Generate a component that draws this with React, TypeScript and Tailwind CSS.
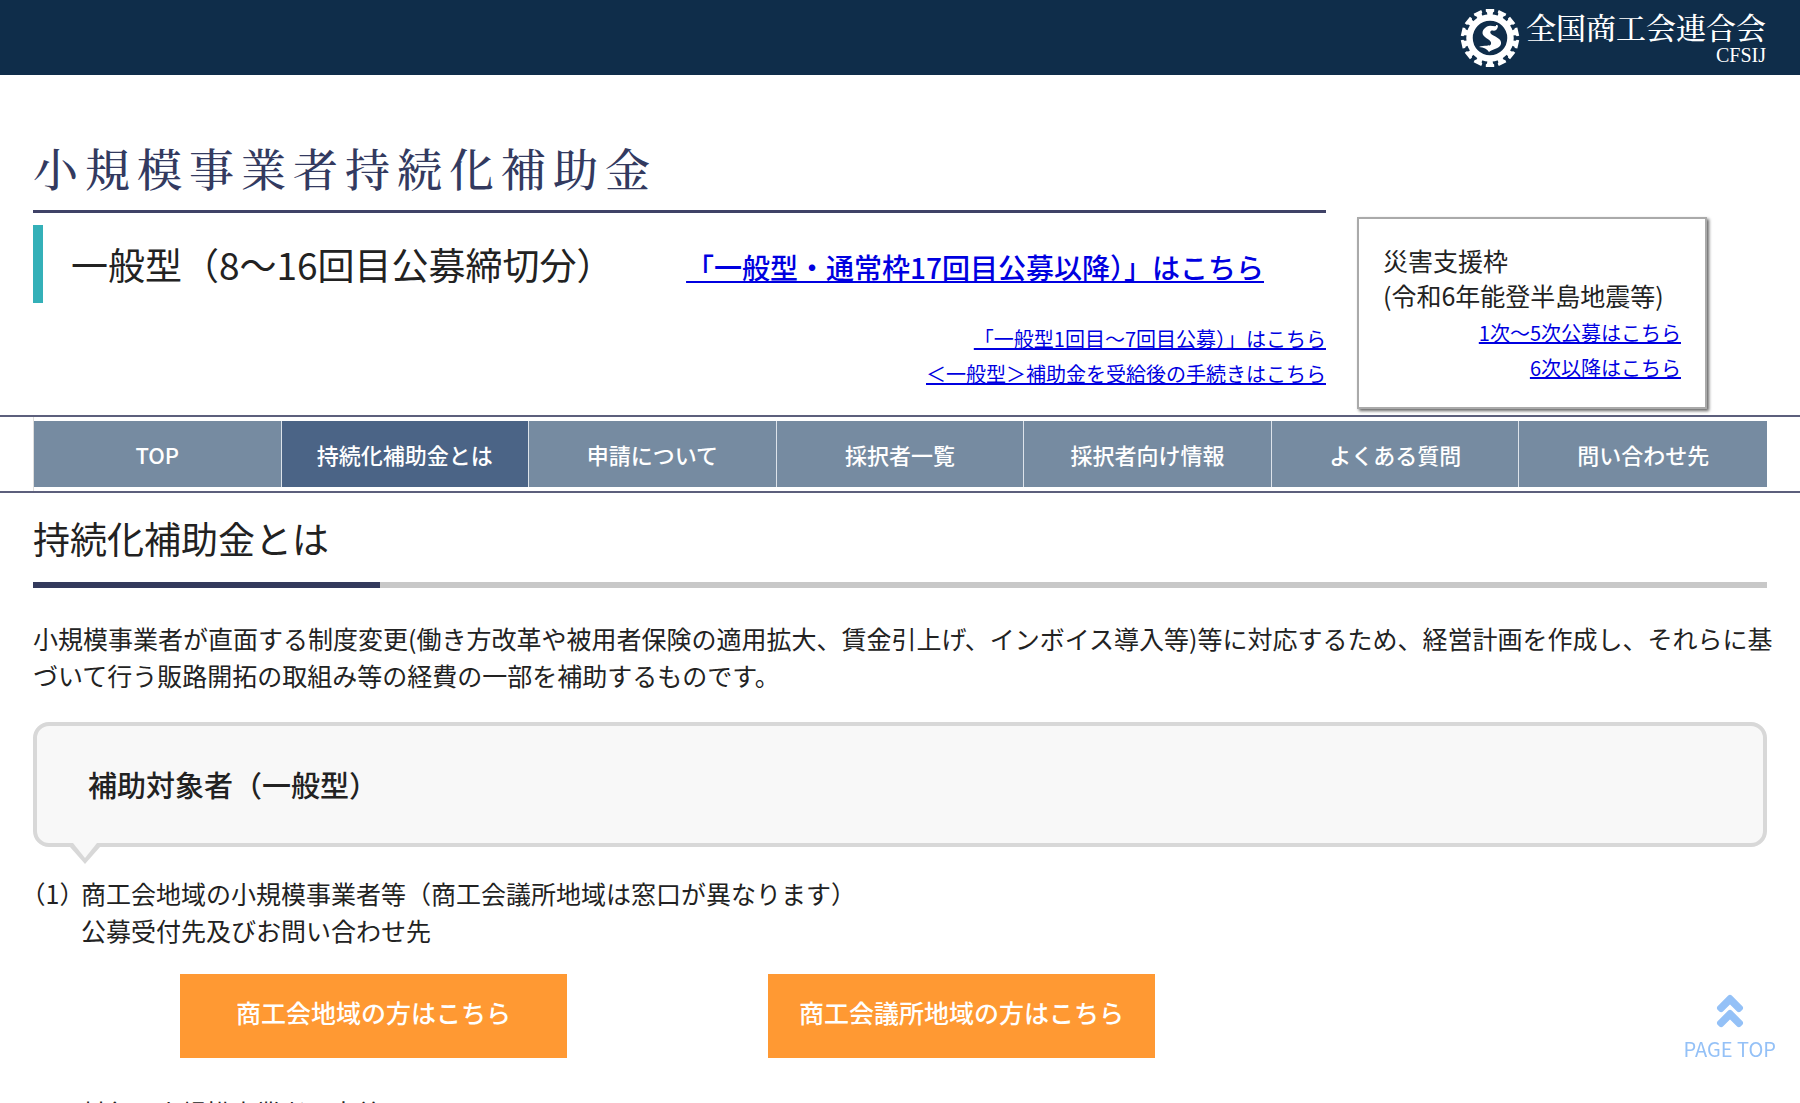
import { FaAngleDoubleUp } from "react-icons/fa";

const navItems = [
  { label: "TOP", active: false },
  { label: "持続化補助金とは", active: true },
  { label: "申請について", active: false },
  { label: "採択者一覧", active: false },
  { label: "採択者向け情報", active: false },
  { label: "よくある質問", active: false },
  { label: "問い合わせ先", active: false },
];

const linkStyle = "text-[#0000e0] underline";

function GearLogo() {
  const teeth = Array.from({ length: 14 }, (_, i) => (i * 360) / 14);
  return (
    <svg viewBox="0 0 60 60" className="size-[60px]" aria-hidden="true">
      <g fill="#fff">
        {teeth.map((deg) => (
          <path key={deg} d="M27.5 8 L27 4.5 L25.8 3.5 V1 H34.2 V3.5 L33 4.5 L32.5 8 Z" transform={`rotate(${deg} 30 30)`} />
        ))}
      </g>
      <circle cx="30" cy="30" r="20.5" fill="none" stroke="#fff" strokeWidth="6.5" />
      <path
        fill="#fff"
        d="M38 17 C35 20 31 16 27 18.5 C22 21.5 21 26 25 29 C28 31.5 32 33 31 36 C30 39 24 36.5 19 39 C24 39.5 27 41 29 44 C32 41 39.5 41 41 36 C42 31 36 29 32.5 27 C29 25 30 22 33 22.5 C36 23.5 38 20.5 38 17 Z"
      />
    </svg>
  );
}

function SiteHeader() {
  return (
    <header className="flex h-[75px] items-center justify-end bg-[#0f2d4a] pr-[34px]">
      <a href="#" className="flex items-center gap-1.5 text-white">
        <GearLogo />
        <span className="flex flex-col items-end pt-0.5 font-medium">
          <span className="font-['Noto_Serif_CJK_JP','Noto_Sans_CJK_JP',serif] text-[30px] leading-8">全国商工会連合会</span>
          <span className="font-['Liberation_Serif',serif] text-[20px] leading-[26px]">CFSIJ</span>
        </span>
      </a>
    </header>
  );
}

function TitleArea() {
  return (
    <div className="flex items-start justify-between px-[33px]">
      <div className="w-[1293px] shrink pt-[63px]">
        <p className="border-b-3 border-[#3f4267] pb-3 font-['Noto_Serif_CJK_JP','Noto_Sans_CJK_JP',serif] text-[45px] leading-[60px] font-medium tracking-[7px] text-[#333a5f]">
          小規模事業者持続化補助金
        </p>
        <div className="mt-3 flex items-start justify-between">
          <h1 className="border-l-10 border-[#34b0b8] pl-7 text-[37px] leading-[78px]">
            一般型（8〜16回目公募締切分）
          </h1>
          <a href="#" className={`mr-[62px] text-[28px] leading-[84px] font-medium ${linkStyle}`}>
            「一般型・通常枠17回目公募以降）」はこちら
          </a>
        </div>
        <div className="mt-3 flex flex-col items-end text-[20px] leading-[35px]">
          <a href="#" className={linkStyle}>「一般型1回目〜7回目公募）」はこちら</a>
          <a href="#" className={linkStyle}>＜一般型＞補助金を受給後の手続きはこちら</a>
        </div>
      </div>
      <div className="mt-[142px] mr-[60px] w-[350px] border-2 border-[#aaa] px-6 pt-6 pb-[22px] leading-[35px] shadow-[2px_2px_3px_#666]">
        <p className="text-[25px] whitespace-nowrap">
          災害支援枠
          <br />
          (令和6年能登半島地震等)
        </p>
        <div className="mt-0.5 flex flex-col items-end text-[20px]">
          <a href="#" className={linkStyle}>1次〜5次公募はこちら</a>
          <a href="#" className={linkStyle}>6次以降はこちら</a>
        </div>
      </div>
    </div>
  );
}

function GlobalNav() {
  return (
    <nav className="mt-1.5 border-y-2 border-[#5c5f7c] px-[33px]">
      <ul className="grid grid-cols-7 border-l border-[#ddd] py-1">
        {navItems.map((item) => (
          <li key={item.label} className="border-r border-[#dde3ea] last:border-r-0">
            <a
              href="#"
              className={`block text-center text-[22px] leading-[66px] font-medium text-white ${
                item.active ? "bg-[#4b6486]" : "bg-[#768ba1]"
              }`}
            >
              {item.label}
            </a>
          </li>
        ))}
      </ul>
    </nav>
  );
}

function Balloon({ children }: { children: string }) {
  return (
    <div className="relative mt-7 rounded-2xl border-4 border-[#d8d8d8] bg-[#f8f8f8] px-[51px] py-9">
      <h3 className="text-[29px] leading-[45px] font-medium">{children}</h3>
      {/* the tail starts inside the border so that its fill opens the bottom edge */}
      <svg viewBox="0 0 30 22" className="absolute top-full left-[33px] h-[22px] w-[30px]" aria-hidden="true">
        <path d="M0 4 L4 0 H26 L30 4 L15 21 Z" fill="#d8d8d8" />
        <path d="M3 0 H27 L15 15 Z" fill="#f8f8f8" />
      </svg>
    </div>
  );
}

export default function App() {
  return (
    <div className="h-screen overflow-hidden bg-white font-['Noto_Sans_CJK_JP',sans-serif] text-[#222]">
      <SiteHeader />
      <TitleArea />
      <GlobalNav />
      <main className="px-[33px] text-[25px] leading-[37px]">
        <h2 className="pt-[15px] pb-3.5 text-[37px] leading-[60px]">持続化補助金とは</h2>
        <div className="h-1.5 bg-[#c8c8c8]">
          <div className="h-full w-1/5 bg-[#333a5c]" />
        </div>
        <p className="mt-8 -mr-6">
          小規模事業者が直面する制度変更(働き方改革や被用者保険の適用拡大、賃金引上げ、インボイス導入等)等に対応するため、経営計画を作成し、それらに基づいて行う販路開拓の取組み等の経費の一部を補助するものです。
        </p>

        <Balloon>補助対象者（一般型）</Balloon>

        <div className="mt-7 flex">
          <span className="w-12 shrink-0 whitespace-nowrap [text-spacing-trim:trim-start]">（1）</span>
          <p>
            商工会地域の小規模事業者等（商工会議所地域は窓口が異なります）
            <br />
            公募受付先及びお問い合わせ先
          </p>
        </div>
        <div className="mt-[25px] ml-[147px] flex gap-[201px] font-medium text-white">
          <a href="#" className="w-[387px] bg-[#ff9933] pt-5 pb-[27px] text-center">商工会地域の方はこちら</a>
          <a href="#" className="w-[387px] bg-[#ff9933] pt-5 pb-[27px] text-center">商工会議所地域の方はこちら</a>
        </div>
        <p className="mt-9 pl-12">対象の小規模事業者の定義</p>
      </main>

      <a href="#" className="fixed right-6 bottom-10 flex flex-col items-center text-[20px] leading-7 text-[#94c1f7]">
        <FaAngleDoubleUp className="mb-1 size-10" stroke="currentColor" strokeWidth={16} />
        PAGE TOP
      </a>
    </div>
  );
}
